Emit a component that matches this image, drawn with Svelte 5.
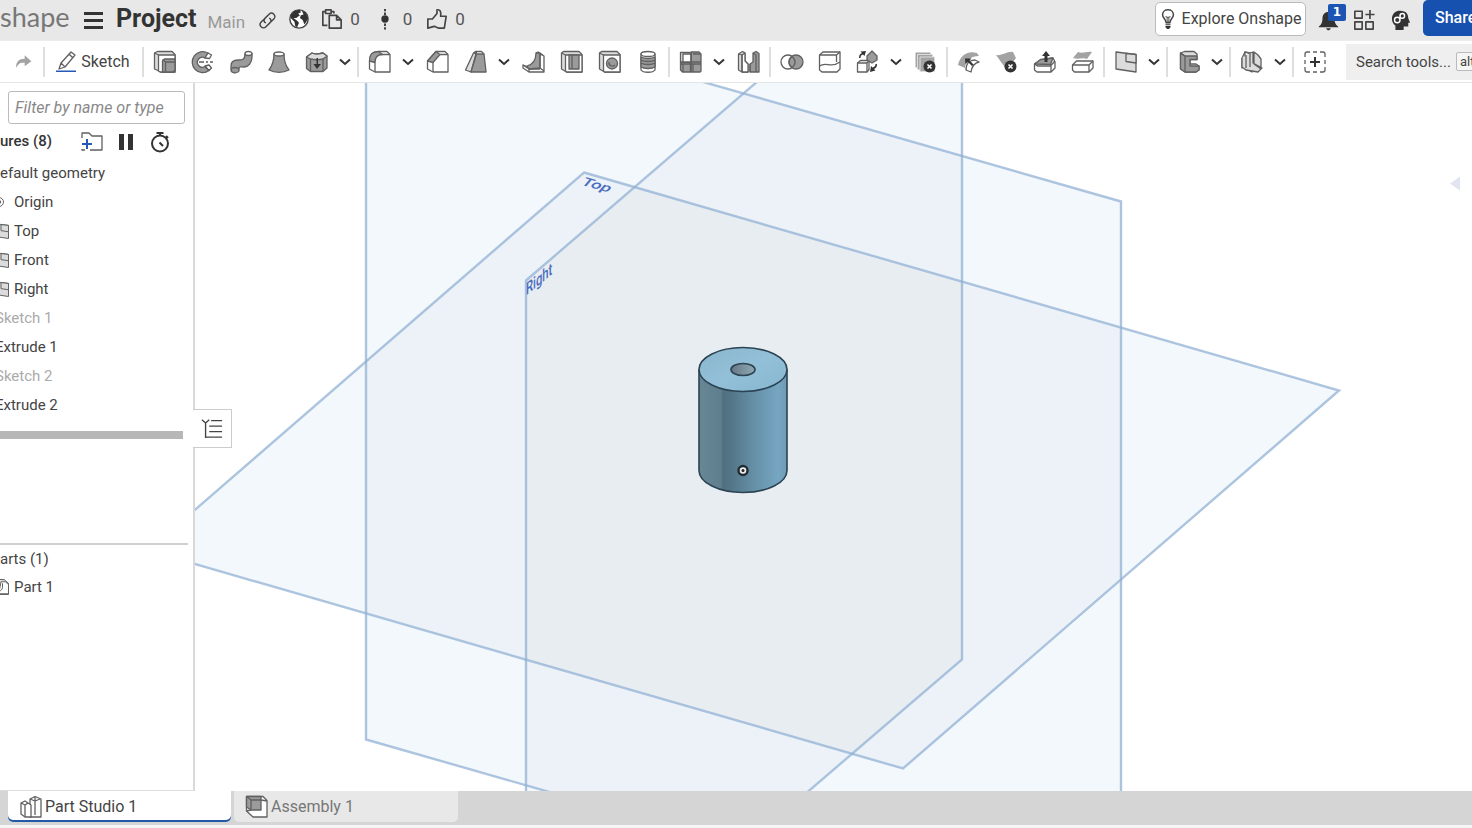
<script>
  const icons = {
    redo: [['m', 'M14 4l8 7-8 6v-4C9 12 6 14 4 19 3 12 7 8 14 8z']],
    pencil: [['l', 'M4 19l2-6L16 2l4 3L10 17zM6 13l4 4M14 4l4 4'], ['b', 'M1 20.500h20V22H1z']],
    extrude: [['a', 'M1.500 3l3-1.500H19l3 3V22H8l-6.500-3z'], ['w', 'M5.500 5H22v17H7l-1.500-1z'], ['g', 'M9.500 11l2-2H22v11l-2 2H9.500z'], ['l', 'M1.500 3l4 2M12.500 22V12H22M9.500 9.500l3 2.500']],
    revolve: [['g', 'M17 3A10.500 10.500 0 1 0 18 20.500L14 16.500A5 5 0 1 1 14 8z'], ['w', 'M14 8l3-5 3.500 2-2 3.500zM14 16l4-1 2.500 3-2.500 2.500z'], ['l', 'M8 12h5M15 12h2M19 12h3']],
    sweep: [['g', 'M2 20v-4c0-5 4-6 7-6 4 0 7 0 7-6h7v3c0 6-4 10-8 10-4 0-5-1-5 2v2c-2 3-8 2-8-1z'], ['w', 'M16 3.500a3.500 2 0 1 0 7 0a3.500 2 0 1 0-7 0z'], ['l', 'M2 19c2-2 6-2 8 0']],
    loft: [['g', 'M7 4c0 6-2 12-5 16 6 3 14 3 20 0-4-5-5-10-5-16z'], ['w', 'M7 4a5 2 0 1 0 10 0a5 2 0 1 0-10 0z']],
    thicken: [['g', 'M1.500 7l5.500-4c3 2 7 1 11 0l4 3v12l-4 3.500H5.500l-4-3z'], ['a', 'M1.500 7L7 3c3 2 7 1 11 0l4 3-4 3c-4 1-8 1-12.500 0z'], ['l', 'M5.500 9v12.500M18 9v12'], ['k', 'M11.500 8h1.500v6h3l-4 5-3.500-5h3z']],
    fillet: [['w', 'M1.500 11c0-7 3-9.500 9-9.500H19l3 3V22H7l-5.500-3z'], ['g', 'M1.500 11c0-7 3-9.500 9-9.500l4 3c-5 0-7.500 3-7.500 8z'], ['l', 'M7 12.500V22M14 4.500h8']],
    chamfer: [['w', 'M1.500 11l8.500-9.500h9l3 3V22H7l-5.500-3z'], ['g', 'M1.500 11L10 1.500l4 3-7 8z'], ['l', 'M7 12.500V22M14 4.500h8']],
    draft: [['a', 'M1.500 20L9.500 3l3-1L7 22z'], ['g', 'M7 22L12.500 4H20l2 17.500v.5z'], ['l', 'M9.500 3l2-1.500h6L20 4M9.500 3l3 1']],
    rib: [['w', 'M1 15l5 2c7 0 10-5 12-13l4 2v16H7l-6-4z'], ['g', 'M5 16C12 14 14 9 14 3l4 0v15l-11 1z'], ['l', 'M1 15l6 4v3M7 19h11M18 3v15l4 3M14 3l2-1 5 3']],
    shell: [['a', 'M1.500 3l2-1.500H19l3 3V22H6.500l-5-3z'], ['w', 'M5.500 5H22v17H6.500l-1-1z'], ['g', 'M9 5h10v14H9z'], ['l', 'M1.500 3l4 2M12 5v14']],
    hole: [['a', 'M1.500 3l2-1.500H19l3 3V22H6.500l-5-3z'], ['w', 'M5.500 5H22v17H6.500l-1-1z'], ['g', 'M8.500 13.500a5.500 5.500 0 1 0 11 0a5.500 5.500 0 1 0-11 0z'], ['l', 'M11 12a3.500 3.500 0 0 0 6 3M1.500 3l4 2']],
    thread: [['w', 'M5 4v16c2 3 12 3 14 0V4z'], ['g', 'M5 7c3 2 11 2 14 0v10c-3 2-11 2-14 0z'], ['l', 'M5 10c3 2 11 2 14 0M5 13c3 2 11 2 14 0'], ['w', 'M5 4a7 2.500 0 1 0 14 0a7 2.500 0 1 0-14 0z']],
    pattern: [['g', 'M1.500 12h10v10h-8l-2-2zM12 12h10v9l-1 1h-9zM12 2h8l2 2v8H12z'], ['a', 'M1.500 2.500h9l1.500 1v8.500H1.500z'], ['w', 'M4 4h8v8H4z'], ['l', 'M1.500 14h20.500M14 4h8M12 2v20M4 14v8M14 14v8']],
    mirror: [['a', 'M1.500 4l4-2.500L8 3v8l3 3v8H5l-3.500-2z'], ['w', 'M5 5l3-2v8l3 3v8H5z'], ['g', 'M13 14l3-2V3l3-1.500 3 2V22h-9z'], ['l', 'M1.500 4L5 5v17M16 3l3 2v17M13 14v8']],
    boolean: [['w', 'M1 12a7 7 0 1 0 14 0a7 7 0 1 0-14 0z'], ['g', 'M9 12a7 7 0 1 0 14 0a7 7 0 1 0-14 0z'], ['l', 'M12 6.500c-4 3-4 8 0 11M12 6.500c4 3 4 8 0 11']],
    split: [['w', 'M1.500 5l3.500-3h17v17l-3 3h-15l-2.500-2z'], ['l', 'M1.500 5h17L22 2M18.500 5v7M1.500 16c7-5 11 3 20.500-4']],
    transform: [['w', 'M1.500 13l3-2.500H13v9l-2 2.500H1.500z'], ['l', 'M1.500 13H11v9M11 13l2-2.500'], ['g', 'M11 6l5-5 5 5v4l-5 3-5-3z'], ['k', 'M3 8c0-3 1-4 3-5L4.500 1.500 10 1 8.500 6 7 4.500C5 5 4.500 6 4.500 8zM21 14c0 3-1 4-3 5l1.500 1.500L14 22l1-6 1.500 1.500c2-.5 3-1.500 3-3.500z']],
    deletePart: [['m', 'M1.500 2.500h15v15h-15z'], ['n', 'M3.500 4.500h15v15h-15z'], ['n', 'M6 7h14.500v14.500H6z'], ['k', 'M9.500 16.500a6 6 0 1 0 12 0a6 6 0 1 0-12 0z'], ['x', 'M13.500 14.500l4 4M17.500 14.500l-4 4']],
    offset: [['m', 'M1 15C3 5 11 0 20 3l2 3C14 6 9 10 8 18z'], ['w', 'M9 20c0-7 4-10 9-10l4 2c-5 1-7 4-8 10z'], ['k', 'M8 8.500h6.500l-2 2 4 4-1.500 1.500-4-4-2.500 2z']],
    deleteFace: [['m', 'M1 5c6 1 12-4 17-3l3 6-9 12C8 15 4 9 1 5z'], ['k', 'M9.500 16.500a6 6 0 1 0 12 0a6 6 0 1 0-12 0z'], ['x', 'M13.500 14.500l4 4M17.500 14.500l-4 4']],
    moveFace: [['w', 'M1.500 14l6-4L20 8l2 4v6l-4 4H4l-2.500-2z'], ['g', 'M1.500 14l6-4.500L20 8l-2.500 6.500z'], ['l', 'M1.500 14l3 2h13L22 11M18 15.500V22'], ['k', 'M11.500 12V6H9l4-5 4 5h-2.500v6z']],
    replaceFace: [['m', 'M2 8l5-6c5 2 9-1 14 0l-5 7c-5-2-8 1-14-1z'], ['w', 'M1.500 15l4-4H22v7l-4 4H3.500l-2-2z'], ['l', 'M1.500 15H18v7M18 15l4-4']],
    plane: [['a', 'M2 2l20 2.500V22L2 19z'], ['a', 'M12 3.500l10 1V13l-10-1.500z']],
    frame: [['a', 'M3.500 3l4-1.500H17l3 2.500v5.500h-7V14l6 0 3 2v4l-3 2H8l-4.500-3z'], ['g', 'M3.500 3L8 6v16l-4.500-3zM8 6h12v3.500h-7V16h9v4l-3 2H8z'], ['l', 'M8 6l-4.500-3']],
    sheet: [['a', 'M2 8l3-6 5 1v13h-4l-4 2z'], ['w', 'M5 2l5 2v13l8 3-6 2-7-4z'], ['a', 'M10 3l3-1v11l9 5-4 4-12-2-4-3V8M18 5l3 4v10l-7-5V2z'], ['l', 'M6 5v13M10 3v14']],
    addTool: [['l', 'M2 7V4q0-2 2-2h3M10 2h4M17 2h3q2 0 2 2v3M22 10v4M22 17v3q0 2-2 2h-3M14 22h-4M7 22H4q-2 0-2-2v-3M2 14v-4'], ['k', 'M11 7h2v4h4v2h-4v4h-2v-4H7v-2h4z']],
    link: [['l2', 'M10 15c-3-1-3-4-1-6l5-5c4-4 10 2 6 6l-4 4M14 9c3 1 3 4 1 6l-5 5c-4 4-10-2-6-6l4-4']],
    globe: [['w2', 'M2 12a10 10 0 1 0 20 0a10 10 0 1 0-20 0z'], ['k', 'M3 8l4-5 6-1 1 3-3 1 2 2-4 3H6l4 3 2 2-2 5-2-1-1-5-4-4zM15 3l4 2 3 6-2 4-2 3-2-5-3-2 1-3 3-1z']],
    docs: [['l2', 'M7 19H2V4h3M11 4h3v2M5 2h6v4H5zM9 8h8l5 5v9H9zM17 8v5h5']],
    version: [['k', 'M8 12a4 4 0 1 0 8 0a4 4 0 1 0-8 0zM11 1h2v2.500h-2zM11 5h2v2.500h-2zM11 17h2v2.500h-2zM11 21h2v2.500h-2z']],
    like: [['l2', 'M2 12h5l5-6V2q5-1 4 7h6l-2 13h-6l-5-2-7 2z']],
    bulb: [['l2', 'M9.500 16c0-4-4-5-4-9 0-8 13-8 13 0 0 4-4 5-4 9z'], ['l', 'M9 9l2 1h2l2-1M11 10v6M13 10v6'], ['k', 'M9 17.500h6V19H9zM9 20h6v2l-2 2h-2l-2-2z']],
    bell: [['k', 'M2 19c3-2 4-5 4-9 0-4 3-7 7-7s6 3 6 7c0 4 1 7 4 9v1H2zM10 21h5c-1 3-4 3-5 0z']],
    apps: [['l2', 'M2 2.500h8V10H2zM2 14h8v8H2zM14 14h8v8h-8zM13.500 6h10M18.500 1v10']],
    head: [['k', 'M7 23v-5C1 14 2 2 12 2c7 0 9 4 9 8l2 5h-2v4h-5v4z'], ['x', 'M6 12a3 3 0 1 0 6 0a3 3 0 1 0-6 0zM12 7.500a2.500 2.500 0 1 0 5 0a2.500 2.500 0 1 0-5 0z']],
    folder: [['l', 'M2 8V3h7l3 3h10v14H10M2 19v1h3'], ['b', 'M6 9h2v4h4v2H8v4H6v-4H2v-2h4z']],
    pause: [['k', 'M5 4h5v16H5zM14 4h5v16h-5z']],
    timer: [['t', 'M4 13.500a8 8 0 1 0 16 0a8 8 0 1 0-16 0zM8.500 3h7M12 3v3M18 6l2 2M11.500 12.500l3.500 3.500']],
    treeList: [['l2', 'M1 3l4 3.500L9 3M11 4h12M5 7v16M9 10h14M9 16h14M5 22h18']],
    studio: [['w', 'M11 4l5-2.500L22 4v18H11z'], ['w', 'M2 8l4-2 6 4v12H6l-4-3z'], ['l', 'M2 8l4 2v12M6 10l3-2M16 1.500V20M11 4l5 2 5-2']],
    assembly: [['w', 'M1.500 1.500H18l4 4V22H8l-6.500-6z'], ['g', 'M1.500 1.500H16V15H6l-4.500-3z'], ['l', 'M6 5h10M6 5v10M16 5l6 1M1.500 1.500L6 5M1.500 16L6 15']],
    part: [['a', 'M2 5l5-3h9l6 5v15H2z'], ['w', 'M12 5h6l4 4v12H9z'], ['l', 'M6 7v8q6 5 8-2V7']],
    origin: [['l', 'M6 12a6 6 0 1 0 12 0a6 6 0 1 0-12 0z'], ['k', 'M9.500 12a2.500 2.500 0 1 0 5 0a2.500 2.500 0 1 0-5 0z']]
  };

  const toolGroups = [
    [['extrude', 'Extrude'], ['revolve', 'Revolve'], ['sweep', 'Sweep'], ['loft', 'Loft'], ['thicken', 'Thicken', 1]],
    [['fillet', 'Fillet', 1], ['chamfer', 'Chamfer'], ['draft', 'Draft', 1], ['rib', 'Rib'], ['shell', 'Shell'], ['hole', 'Hole'], ['thread', 'Thread']],
    [['pattern', 'Pattern', 1], ['mirror', 'Mirror']],
    [['boolean', 'Boolean'], ['split', 'Split'], ['transform', 'Transform', 1], ['deletePart', 'Delete part']],
    [['offset', 'Offset surface'], ['deleteFace', 'Delete face'], ['moveFace', 'Move face'], ['replaceFace', 'Replace face']],
    [['plane', 'Plane', 1]],
    [['frame', 'Frame', 1]],
    [['sheet', 'Sheet metal', 1]],
    [['addTool', 'Add tool']]
  ];

  const features = [
    { name: 'efault geometry', kind: 'edge' },
    { name: 'Origin', icon: 'origin' },
    { name: 'Top', icon: 'plane' },
    { name: 'Front', icon: 'plane' },
    { name: 'Right', icon: 'plane' },
    { name: 'Sketch 1', kind: 'cut', muted: true },
    { name: 'Extrude 1', kind: 'cut' },
    { name: 'Sketch 2', kind: 'cut', muted: true },
    { name: 'Extrude 2', kind: 'cut' }
  ];

  const planes = {
    front: '366,-15 1121,201 1121,955 366,739',
    right: '526,280 962,-95 962,659 526,1033',
    top: '584,172 1339,390 903,768 148,550'
  };
</script>

{#snippet icon(name)}
  <svg class="icon" viewBox="0 0 24 24" aria-hidden="true">
    {#each icons[name] as [kind, d]}<path class={'i-' + kind} {d} />{/each}
  </svg>
{/snippet}

{#snippet caret(label)}
  <button class="caret" aria-label={label + ' options'}>
    <svg viewBox="0 0 12 8" aria-hidden="true"><path d="M1 1.500l5 4.500 5-4.500" /></svg>
  </button>
{/snippet}

<div class="app">
  <header>
    <span class="logo">shape</span>
    <button class="menu" aria-label="Main menu"><i></i><i></i><i></i></button>
    <h1>Project</h1>
    <span class="branch">Main</span>
    <button class="head-btn link" aria-label="Copy link">{@render icon('link')}</button>
    <button class="head-btn" aria-label="Public">{@render icon('globe')}</button>
    <button class="head-btn count" aria-label="Copies">{@render icon('docs')}<span>0</span></button>
    <button class="head-btn count" aria-label="Versions">{@render icon('version')}<span>0</span></button>
    <button class="head-btn count" aria-label="Likes">{@render icon('like')}<span>0</span></button>
    <div class="head-right">
      <button class="explore">{@render icon('bulb')}Explore Onshape</button>
      <button class="head-btn bell" aria-label="Notifications">{@render icon('bell')}<b>1</b></button>
      <button class="head-btn" aria-label="Apps">{@render icon('apps')}</button>
      <button class="head-btn" aria-label="Learning">{@render icon('head')}</button>
      <button class="share">Share</button>
    </div>
  </header>

  <nav class="toolbar" aria-label="Tools">
    <button class="tool" aria-label="Redo">{@render icon('redo')}</button>
    <i class="sep"></i>
    <button class="sketch">{@render icon('pencil')}Sketch</button>
    {#each toolGroups as group}
      <i class="sep"></i>
      {#each group as [name, label, menu]}
        <button class="tool" aria-label={label}>{@render icon(name)}</button>
        {#if menu}{@render caret(label)}{/if}
      {/each}
    {/each}
    <button class="search"><span>Search tools...</span><kbd>alt</kbd></button>
  </nav>

  <main>
    <aside>
      <section class="features">
        <input type="text" aria-label="Filter" placeholder="Filter by name or type" />
        <div class="panel-head">
          <h2>ures (8)</h2>
          <button aria-label="Add folder">{@render icon('folder')}</button>
          <button aria-label="Pause">{@render icon('pause')}</button>
          <button aria-label="Timing">{@render icon('timer')}</button>
        </div>
        <ul>
          {#each features as f}
            <li class={f.kind} class:muted={f.muted}>
              {#if f.icon}<span class="row-icon" class:far={f.icon === 'origin'}>{@render icon(f.icon)}</span>{/if}{f.name}
            </li>
          {/each}
        </ul>
        <div class="rollback"></div>
      </section>
      <section class="parts">
        <h3>arts (1)</h3>
        <ul><li><span class="row-icon">{@render icon('part')}</span>Part 1</li></ul>
      </section>
    </aside>

    <div class="viewport">
      <svg class="scene" viewBox="195 82 1277 709" preserveAspectRatio="xMidYMid slice" role="img" aria-label="Part 1">
        <defs>
          <clipPath id="clip-front"><polygon points={planes.front} /></clipPath>
          <clipPath id="clip-right"><polygon points={planes.right} /></clipPath>
          <linearGradient id="side">
            <stop offset="0" stop-color="#688795" />
            <stop offset=".25" stop-color="#607f8e" />
            <stop offset=".27" stop-color="#4f7080" />
            <stop offset=".38" stop-color="#557789" />
            <stop offset=".65" stop-color="#6692aa" />
            <stop offset=".9" stop-color="#76a6c2" />
            <stop offset="1" stop-color="#6f9bb3" />
          </linearGradient>
          <linearGradient id="cap" x2="1" y2="1">
            <stop offset="0" stop-color="#8ab6cc" />
            <stop offset=".5" stop-color="#93c0d8" />
            <stop offset="1" stop-color="#86b6d0" />
          </linearGradient>
          <linearGradient id="bore"><stop stop-color="#657985" /><stop offset="1" stop-color="#91a8b5" /></linearGradient>
        </defs>
        <g fill="#f3f8fc">
          <polygon points={planes.front} />
          <polygon points={planes.right} />
          <polygon points={planes.top} />
        </g>
        <g fill="#ecf2f7">
          <polygon points={planes.right} clip-path="url(#clip-front)" />
          <polygon points={planes.top} clip-path="url(#clip-front)" />
          <polygon points={planes.top} clip-path="url(#clip-right)" />
        </g>
        <g clip-path="url(#clip-front)"><polygon points={planes.top} fill="#e8edf2" clip-path="url(#clip-right)" /></g>
        <g class="edges">
          <polygon points={planes.front} />
          <polygon points={planes.right} />
          <polygon points={planes.top} />
        </g>
        <text class="plane-name" transform="matrix(1 .28 -.5 .6 580 184)">Top</text>
        <text class="plane-name" transform="matrix(.66 -.54 0 1 526 295)">Right</text>
        <g stroke="#2b4352" stroke-width="1.600">
          <path d="M699 369V470A44 22 0 0 0 787 470V369" fill="url(#side)" />
          <ellipse cx="743" cy="369" rx="44" ry="22" fill="url(#cap)" />
          <ellipse cx="743" cy="369" rx="12" ry="6" fill="url(#bore)" />
        </g>
        <circle cx="743" cy="470" r="4.500" fill="#eee" stroke="#222b30" stroke-width="2.400" />
        <circle cx="743" cy="470" r="1.500" fill="#222" />
        <path d="M1460 176v14l-10-7z" fill="#e1e5ef" />
      </svg>
      <button class="tree-toggle" aria-label="Toggle feature list">{@render icon('treeList')}</button>
    </div>
  </main>

  <footer>
    <button class="tab active">{@render icon('studio')}Part Studio 1</button>
    <button class="tab">{@render icon('assembly')}Assembly 1</button>
  </footer>
</div>

<style>
  :global(body) { margin: 0; background: #fff; }
  * { box-sizing: border-box; }
  .app {
    display: grid;
    grid-template-rows: 41px 42px minmax(0, 1fr) 37px;
    grid-template-columns: minmax(0, 1fr);
    height: 100vh;
    overflow: hidden;
    font: 15px/20px Roboto, sans-serif;
    color: #444;
  }
  button { padding: 0; border: 0; background: none; font: inherit; color: inherit; flex: none; display: flex; align-items: center; justify-content: center; }
  ul { list-style: none; margin: 0; padding: 0; }
  h1, h2, h3 { margin: 0; }

  .icon { width: 24px; height: 24px; flex: none; display: block; }
  .icon path { stroke: #606060; stroke-width: 1.3; stroke-linejoin: round; }
  .icon .i-l { fill: none; }
  .icon .i-w { fill: #fff; }
  .icon .i-a { fill: #dcdcdc; }
  .icon .i-g { fill: #9b9b9b; }
  .icon .i-m { fill: #a3a3a3; stroke: none; }
  .icon .i-n { fill: #a3a3a3; stroke: #ddd; stroke-width: 1; }
  .icon .i-k { fill: #333; stroke: none; }
  .icon .i-b { fill: #2459b5; stroke: none; }
  .icon .i-x { fill: none; stroke: #fff; stroke-width: 1.6; }
  .icon .i-l2 { fill: none; stroke: #444; stroke-width: 1.8; }
  .icon .i-w2 { fill: #fff; stroke: #444; stroke-width: 1.5; }
  .icon .i-t { fill: none; stroke: #333; stroke-width: 2; }

  header { display: flex; align-items: center; background: #e8e8e8; border-bottom: 1px solid #ededed; padding-bottom: 2px; }
  .logo { width: 71px; flex: none; font: 27px/28px Lato, sans-serif; color: #777; margin-top: -5px; }
  .menu { flex-direction: column; gap: 4px; width: 20px; margin: 2px 0 0 12px; }
  .menu i { width: 19px; height: 3px; background: #333; }
  h1 { margin-left: 13px; font-size: 25px; line-height: 30px; font-weight: 700; color: #333; }
  .branch { margin: 5px 13px 0 11px; font-size: 17px; color: #999; }
  .head-btn .icon { width: 22px; height: 22px; }
  .head-btn { margin-right: 11px; }
  .head-btn.link { margin-top: 2px; }
  .head-btn.link .icon { width: 19px; height: 19px; }
  .count { font-size: 17px; gap: 7px; margin-right: 14px; color: #555; }
  .head-right { display: flex; align-items: center; margin-left: auto; height: 38px; }
  .explore { height: 34px; width: 151px; gap: 4px; margin-right: 11px; background: #fff; border: 1px solid #bbb; border-radius: 5px; font-size: 16px; white-space: nowrap; }
  .explore .icon { width: 20px; height: 22px; margin-left: -2px; }
  .head-right .head-btn { margin-right: 14px; margin-top: 2px; }
  .head-right .head-btn:nth-child(4) { margin-right: 12px; }
  .bell { position: relative; }
  .bell b { position: absolute; left: 11px; top: -5px; width: 18px; height: 17px; border-radius: 2px; background: #1b54b3; color: #fff; font: 700 12px/17px "DejaVu Sans", sans-serif; }
  .share { align-self: flex-start; width: 49px; height: 36px; padding-left: 12px; justify-content: flex-start; background: #1651b0; color: #fff; border-radius: 5px 0 0 5px; font-size: 16px; font-weight: 500; overflow: hidden; }

  .toolbar { display: flex; align-items: center; padding-left: 4px; background: #fff; border-bottom: 1px solid #e3e5e7; }
  .tool { width: 38px; height: 32px; }
  .tool[aria-label="Redo"] .icon { width: 20px; }
  .caret { width: 20px; height: 32px; padding-right: 2px; }
  .caret svg { width: 12px; height: 8px; }
  .caret path { fill: none; stroke: #333; stroke-width: 2; }
  .sep { flex: none; width: 2px; height: 30px; margin: 0 2px 0 1px; background: #dedede; }
  .sketch { width: 94px; gap: 2px; padding-right: 3px; font-size: 16px; }
  .search { flex: 1 1 0; min-width: 0; height: 36px; margin-left: 12px; padding-left: 10px; gap: 5px; justify-content: flex-start; overflow: hidden; background: #efefef; font-size: 15px; white-space: nowrap; }
  kbd { padding: 0 3px; border: 1px solid #bbb; border-radius: 2px; font: 13px/17px Roboto, sans-serif; background: #f5f5f5; }

  main { display: grid; grid-template-columns: 195px minmax(0, 1fr); }
  aside { display: grid; grid-template-rows: minmax(0, 65fr) minmax(0, 35fr); border-right: 2px solid #d9d9d9; border-bottom: 1px solid #ddd; overflow: hidden; }
  section { overflow: hidden; }
  .features { padding-top: 8px; }
  input { display: block; width: 177px; height: 33px; margin-left: 8px; padding: 0 6px; border: 1px solid #bbb; border-radius: 3px; font: italic 16px/20px Roboto, sans-serif; color: #444; }
  input::placeholder { color: #888; opacity: 1; }
  .panel-head { display: flex; align-items: center; height: 34px; gap: 10px; padding-right: 21px; }
  .panel-head button:first-of-type { margin-left: auto; }
  .panel-head .icon { margin-top: 2px; }
  h2 { font-size: 15px; line-height: 20px; font-weight: 500; color: #333; }
  li { display: flex; align-items: center; height: 29px; white-space: nowrap; }
  .row-icon { width: 10px; margin-right: 4px; display: flex; justify-content: flex-end; }
  .row-icon .icon { width: 18px; height: 18px; }
  .row-icon.far { padding-right: 2px; }
  .cut { margin-left: -5px; }
  .muted { color: #aaa; }
  .rollback { width: 183px; height: 8px; margin-top: 12px; background: #b7b7b7; }
  .parts { margin-right: 5px; border-top: 2px solid #d0d0d0; }
  h3 { font-size: 15px; line-height: 28px; font-weight: 400; }

  .viewport { position: relative; background: #fff; min-height: 0; }
  .scene { display: block; width: 100%; height: 100%; }
  .edges { fill: none; stroke: #8fafd3; stroke-opacity: .72; stroke-width: 2.4; }
  .plane-name { font: 500 17px Roboto, sans-serif; fill: #4a6cc0; }
  .tree-toggle { position: absolute; left: -2px; top: 46%; width: 39px; height: 39px; background: #fff; border: 1px solid #ccc; border-left: 0; }
  .tree-toggle .icon { width: 22px; height: 22px; }
  .tree-toggle .icon path { stroke-width: 1.5; }

  footer { display: flex; align-items: flex-start; gap: 3px; padding-left: 8px; background: #d5d5d5; border-bottom: 3px solid #f5f5f5; }
  .tab { width: 224px; height: 31px; padding: 1px 0 0 11px; gap: 2px; justify-content: flex-start; font-size: 16px; color: #777; background: #e8e8e8; border-radius: 0 0 5px 5px; }
  .tab.active { width: 223px; color: #444; background: #fff; box-shadow: inset 0 -2px #2358a4; }
</style>
